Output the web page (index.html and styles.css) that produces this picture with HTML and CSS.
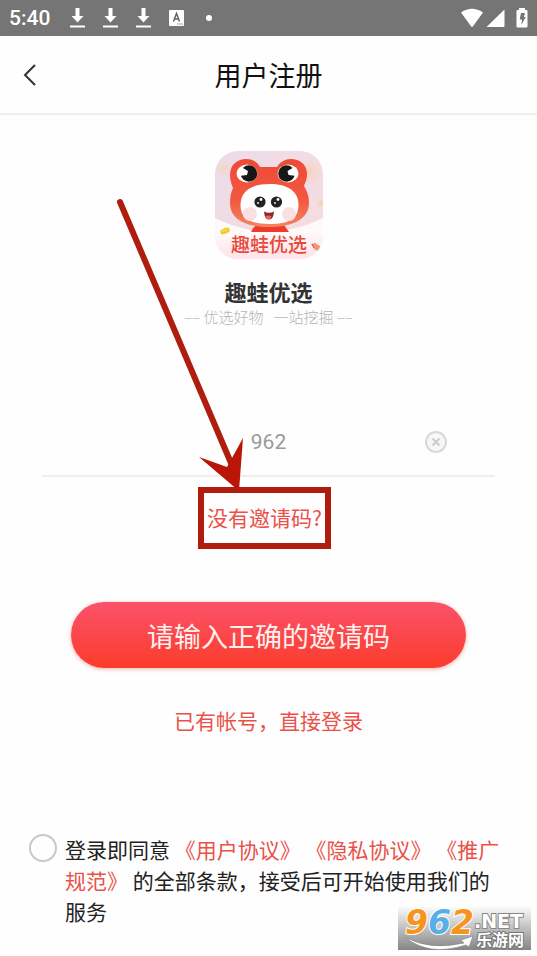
FILE: index.html
```html
<!DOCTYPE html>
<html lang="zh-CN">
<head>
    <meta charset="UTF-8">
    <meta name="viewport" content="width=device-width, initial-scale=1.0">
    <title>用户注册</title>
    <link rel="stylesheet" href="styles.css">
</head>
<body>
<div class="status-bar">
    <span class="time">5:40</span>
    <div class="notifications">
        <svg width="17" height="20" viewBox="0 0 17 20"><path d="M6.500 0h4v8h4l-6 6.500-6-6.500h4zM1 17.500h15v2h-15z" fill="#fff"/></svg>
        <svg width="17" height="20" viewBox="0 0 17 20"><path d="M6.500 0h4v8h4l-6 6.500-6-6.500h4zM1 17.500h15v2h-15z" fill="#fff"/></svg>
        <svg width="17" height="20" viewBox="0 0 17 20"><path d="M6.500 0h4v8h4l-6 6.500-6-6.500h4zM1 17.500h15v2h-15z" fill="#fff"/></svg>
        <svg width="17" height="20" viewBox="0 0 17 20">
            <rect x="1" y="2" width="15" height="16" rx="1" fill="#fff"/>
            <path d="M5.500 13.500l3-8 3 8M6.500 11h4" fill="none" stroke="#666" stroke-width="1.500"/>
            <path d="M9 16h1.200M11.300 16h1.200M13.500 16h1.200" stroke="#666" stroke-width="1.200"/>
        </svg>
        <svg width="17" height="20" viewBox="0 0 17 20"><circle cx="8" cy="10" r="3" fill="#fff"/></svg>
    </div>
    <div class="system">
        <svg width="24" height="20" viewBox="0 0 24 20"><path d="M1 4.500Q12-3 23 4.500L13 18.300Q12 19.300 11 18.300z" fill="#fff"/></svg>
        <svg width="19" height="20" viewBox="0 0 19 20"><path d="M18.500 1.500V18q0 1-1 1H.500z" fill="#fff"/></svg>
        <svg class="battery" width="12" height="20" viewBox="0 0 12 20">
            <path d="M3 0h6v2h1.500q1 0 1 1v15.500q0 1-1 1h-9q-1 0-1-1V3q0-1 1-1H3z" fill="#fff"/>
            <path d="M5 5h4l-1.200 4h2L5.300 17l.7-5.500H3.700z" fill="#757575"/>
        </svg>
    </div>
</div>

<header class="header">
    <button type="button" class="back" aria-label="返回">
        <svg width="14" height="22" viewBox="0 0 14 22"><path d="M12 1L2 11l10 10" fill="none" stroke="#333" stroke-width="2"/></svg>
    </button>
    <h1>用户注册</h1>
</header>

<main class="container">
    <svg class="logo" viewBox="0 0 108 108" role="img" aria-label="趣蛙优选">
        <defs>
            <clipPath id="logoShape"><rect width="108" height="108" rx="23"/></clipPath>
            <linearGradient id="logoBg" x1="0" y1="0" x2="1" y2="1">
                <stop offset="0" stop-color="#ecdce8"/>
                <stop offset="1" stop-color="#f6dce0"/>
            </linearGradient>
            <linearGradient id="logoFoot" x1="0" y1="0" x2="0" y2="1">
                <stop offset="0.300" stop-color="#fffafa"/>
                <stop offset="1" stop-color="#ffe3e7"/>
            </linearGradient>
            <linearGradient id="frog" x1="0" y1="0" x2="0" y2="1">
                <stop offset="0" stop-color="#ee4a35"/>
                <stop offset="0.600" stop-color="#f1583f"/>
                <stop offset="1" stop-color="#f58461"/>
            </linearGradient>
            <radialGradient id="glow">
                <stop offset="0" stop-color="#f8cfae"/>
                <stop offset="1" stop-color="#f8cfae" stop-opacity="0"/>
            </radialGradient>
        </defs>
        <g clip-path="url(#logoShape)">
            <rect width="108" height="108" fill="url(#logoBg)"/>
            <circle cx="9" cy="18" r="9" fill="url(#glow)" opacity="0.600"/>
            <circle cx="94" cy="21" r="14" fill="url(#glow)" opacity="0.700"/>
            <circle cx="106" cy="52" r="5" fill="url(#glow)"/>
            <path d="M0 67Q54 94 108 67v41H0z" fill="url(#logoFoot)"/>
            <path d="M42 74h27l5 7H36q2-5 6-7z" fill="#ed3a2c"/>
            <path d="M15 24C15 13 23 8 31 8c7 0 11 3 14 8h17c3-5 8-8 14-8 8 0 16 5 16 15 0 6-2 9-3 12 3 5 5 10 5 17 0 17-18 24-40 24S15 69 15 52c0-6 1-11 3-15-1-3-3-7-3-13z" fill="url(#frog)"/>
            <ellipse cx="32" cy="22.500" rx="10.500" ry="9" fill="#fff"/>
            <ellipse cx="73" cy="22.500" rx="10.500" ry="9" fill="#fff"/>
            <circle cx="34" cy="22.500" r="8.300" fill="#171717"/>
            <circle cx="71.500" cy="22.500" r="8.300" fill="#171717"/>
            <path d="M24 17l4 0 5 3-1 4-8 1zM81.500 17l-4 0-5 3 1 4 8 1z" fill="#fff"/>
            <path d="M54.500 33c18 0 29 7 29 21s-10 19-29 19-29-5-29-19 11-21 29-21z" fill="#fff"/>
            <circle cx="35" cy="63" r="7" fill="#fbe0e1"/>
            <circle cx="74" cy="63" r="7" fill="#fbe0e1"/>
            <circle cx="45" cy="51" r="5.600" fill="#222"/>
            <circle cx="61.500" cy="51" r="5.600" fill="#222"/>
            <g fill="#fff">
                <circle cx="46" cy="48.500" r="1.400"/><circle cx="43" cy="52" r=".9"/>
                <circle cx="63" cy="48.500" r="1.400"/><circle cx="60" cy="52" r=".9"/>
            </g>
            <path d="M49 60.500q5 2.500 10 0-.5 8-5 8t-5-8z" fill="#8e2b2b"/>
            <path d="M50.500 65.500q3-2 6 0-1 3-3 3t-3-3z" fill="#f4604f"/>
            <ellipse cx="10" cy="80" rx="5" ry="2.800" transform="rotate(-22 10 80)" fill="#f1cb27"/>
            <path d="M7 80.500l5-2" stroke="#fae86b" stroke-width="1"/>
            <path d="M96 93l4-1 5 3v5l-5-1z" fill="#ee9877"/>
            <path d="M97 93l2 4" stroke="#d9543d" stroke-width="1"/>
            <text class="logo-text" x="16" y="101">趣蛙优选</text>
        </g>
    </svg>
    <h2>趣蛙优选</h2>
    <p class="slogan">––&nbsp;优选好物&nbsp;&nbsp; 一站挖掘&nbsp;––</p>

    <form class="register-form">
        <div class="input-wrapper">
            <input type="text" name="code" value="962" aria-label="邀请码">
            <button type="reset" class="clear" aria-label="清除">
                <svg width="24" height="24" viewBox="0 0 24 24"><circle cx="12" cy="12" r="10" fill="#f7f7f7" stroke="#d8d8d8" stroke-width="2"/><path d="M8.500 8.500l7 7M15.500 8.500l-7 7" stroke="#ccc" stroke-width="2"/></svg>
            </button>
        </div>
        <div class="no-code">
            <a href="#">没有邀请码?</a>
            <svg class="arrow" width="132" height="296" viewBox="0 0 132 296">
                <path d="M7 7L118 268" stroke="#b01d0e" stroke-width="6" stroke-linecap="round"/>
                <path d="M126 296L86 262l28 10 16-29z" fill="#b91607"/>
            </svg>
        </div>
        <button type="submit" class="submit-button">请输入正确的邀请码</button>
        <a href="#" class="login-link">已有帐号，直接登录</a>
        <div class="agreement">
            <input type="checkbox" id="agree">
            <label for="agree">登录即同意 <a href="#">《用户协议》</a> <a href="#">《隐私协议》</a> <a href="#">《推广规范》</a> 的全部条款，接受后可开始使用我们的服务</label>
        </div>
    </form>
</main>

<svg class="watermark" width="133" height="43" viewBox="0 0 133 43">
    <defs>
        <linearGradient id="markBg" x1="0" y1="0" x2="0" y2="1">
            <stop offset="0" stop-color="#fafafa"/>
            <stop offset="1" stop-color="#858585"/>
        </linearGradient>
    </defs>
    <rect width="133" height="43" fill="url(#markBg)"/>
    <path d="M7 30Q32 44 66 36l-3-3 12-4-4 11-3-2Q30 50 7 30z" fill="#fff" stroke="#888" stroke-width=".7"/>
    <text class="mark-number" x="7" y="27"><tspan fill="#f7941e">9</tspan><tspan fill="#58aee5">6</tspan><tspan fill="#f7941e">2</tspan></text>
    <text class="mark-net" x="76" y="21">.NET</text>
    <text class="mark-name" x="78" y="39">乐游网</text>
</svg>
</body>
</html>
```

FILE: styles.css
```css
body {
    font-family: "Noto Sans CJK SC", sans-serif;
    background-color: #fefefe;
    color: #222;
    margin: 0;
    min-height: 100vh;
    position: relative;
}
button {
    font-family: inherit;
    background: none;
    border: none;
    padding: 0;
    cursor: pointer;
}
svg {
    display: block;
}
a {
    color: #ea5149;
    text-decoration: none;
}
.status-bar {
    display: flex;
    align-items: center;
    height: 36px;
    padding: 0 9px;
    background-color: #757575;
    color: white;
}
.time {
    font-family: Roboto, sans-serif;
    font-size: 21px;
    font-weight: 500;
}
.notifications {
    display: flex;
    gap: 16px;
    margin-left: 19px;
}
.system {
    display: flex;
    gap: 2px;
    margin-left: auto;
}
.battery {
    margin-left: 9px;
}
.header {
    display: grid;
    grid-template-columns: 60px 1fr 60px;
    align-items: center;
    height: 77px;
    border-bottom: 2px solid #efefef;
}
.back {
    display: flex;
    justify-content: center;
}
h1 {
    margin: 0;
    font-size: 27px;
    line-height: 38px;
    font-weight: 400;
    text-align: center;
    color: #111;
}
.container {
    padding-top: 36px;
    text-align: center;
}
.logo {
    width: 108px;
    margin: 0 auto;
}
.logo-text {
    font-size: 19px;
    font-weight: 500;
    fill: #e74a3c;
}
h2 {
    margin: 17px 0 0;
    font-size: 22px;
    line-height: 30px;
    font-weight: 600;
    color: #333;
}
.slogan {
    margin: 0;
    font-size: 15px;
    line-height: 22px;
    font-weight: 300;
    color: #b5b5b5;
}
.register-form {
    display: flex;
    flex-direction: column;
    margin-top: 81px;
}
.input-wrapper {
    display: grid;
    grid-template-columns: 118px 1fr 118px;
    align-items: center;
    height: 66px;
    margin: 0 42px;
    border-bottom: 2px solid #eee;
}
.input-wrapper input {
    grid-column: 2;
    min-width: 0;
    padding: 0;
    border: none;
    outline: none;
    background: none;
    font-family: Roboto, sans-serif;
    font-size: 21px;
    text-align: center;
    color: #999;
}
.clear {
    justify-self: center;
}
.no-code {
    position: relative;
    align-self: center;
    margin: 10px 8px 0 0;
    padding: 9px 3px 11px;
    border: 6px solid #b01d0e;
    font-size: 21px;
    line-height: 30px;
}
.arrow {
    position: absolute;
    right: 80px;
    bottom: 52px;
    pointer-events: none;
}
.submit-button {
    height: 66px;
    margin: 53px 71px 0;
    border-radius: 33px;
    background: linear-gradient(#fb526a, #fb3c2b);
    box-shadow: 0 1px 4px rgba(200, 60, 50, 0.4);
    font-size: 27px;
    color: #fff0ee;
}
.login-link {
    align-self: center;
    margin-top: 37px;
    font-size: 21px;
    line-height: 30px;
}
.agreement {
    display: flex;
    align-items: flex-start;
    gap: 8px;
    margin-top: 99px;
    padding: 0 34px 0 29px;
    font-size: 21px;
    line-height: 31px;
    text-align: left;
}
.agreement input {
    appearance: none;
    flex: none;
    width: 28px;
    height: 28px;
    margin: 0;
    border: 2px solid #c8c8c8;
    border-radius: 50%;
}
.agreement input:checked {
    background-color: #ea5149;
}
.watermark {
    position: absolute;
    right: 6px;
    bottom: 6px;
    overflow: visible;
}
.mark-number {
    font-family: "DejaVu Sans", sans-serif;
    font-size: 33px;
    font-weight: bold;
    font-style: italic;
    stroke: white;
    stroke-width: 2px;
    paint-order: stroke;
}
.mark-net {
    font-family: "DejaVu Sans", sans-serif;
    font-size: 19px;
    font-weight: bold;
    fill: white;
    stroke: #888;
    stroke-width: 2px;
    paint-order: stroke;
}
.mark-name {
    font-size: 16px;
    font-weight: bold;
    fill: white;
    stroke: #777;
    stroke-width: 2px;
    paint-order: stroke;
}
```
